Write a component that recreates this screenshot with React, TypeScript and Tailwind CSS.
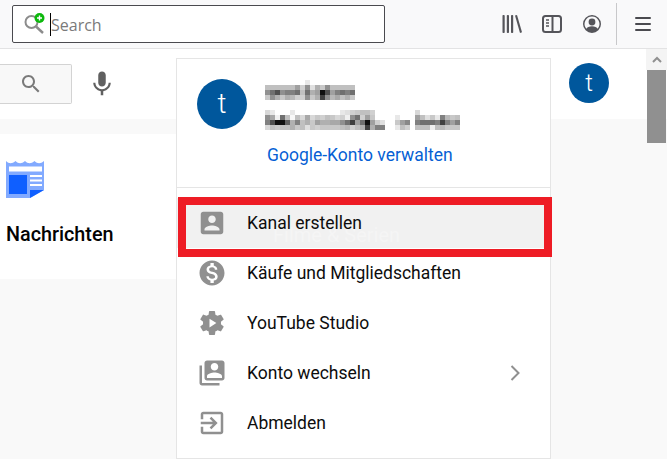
const MosaicRow = ({ cells }: { cells: string[] }) => (
  <div className="flex h-[5px]">
    {cells.map((c, i) => (
      <span key={i} className="block h-[5px] w-[5px]" style={{ backgroundColor: c === "ff" ? "#ffffff" : `#${c}${c}${c}` }} />
    ))}
  </div>
);

const nameRows = [
  "ff ff ff ff ff ff ff ff e8 ff ff ff ff ff ff ff ff ff",
  "c0 c0 c0 c0 c0 c0 a0 d0 90 e0 b0 c8 90 c0 c0 c0 c0 c0",
  "90 70 50 90 80 80 70 c0 70 b0 a0 10 50 a0 80 70 80 70",
  "c8 90 b0 c8 b0 b8 d0 d0 90 c8 b0 40 90 b8 a8 c0 b0 c8",
].map((r) => r.split(" "));

const mailRows = [
  "d8 e8 ff ff ff e8 ff ff ff ff ff ff ff ff ff e8 e0 d0 c8 c0 c0 d0 ff ff ff ff ff ff ff ff d8 ff ff ff ff ff ff ff ff",
  "90 a8 f0 70 c0 f8 c0 d8 a8 d8 c8 d0 c0 c8 d8 d0 f0 90 70 d0 a0 c8 ff ff ff ff e8 ff ff ff a0 c0 e0 c8 e8 80 b8 c8 c0",
  "80 50 10 10 60 b0 80 c0 b0 c8 a0 b0 b0 a8 a8 90 70 40 a0 70 10 a0 d0 e0 ff ff c8 a0 88 ff 80 70 70 70 80 40 80 a0 80",
  "d8 c0 c8 c0 c0 b0 c8 c0 e0 c8 d0 c8 c8 c8 c8 c0 b8 d0 c0 b0 40 b0 80 80 ff ff e8 c0 d0 ff c0 c0 c0 f0 c0 b8 c8 c8 c8",
].map((r) => r.split(" "));

const paths = {
  search:
    "M15.5 14h-.79l-.28-.27C15.41 12.59 16 11.11 16 9.5 16 5.91 13.09 3 9.5 3S3 5.91 3 9.5 5.91 16 9.5 16c1.61 0 3.09-.59 4.23-1.57l.27.28v.79l5 4.99L20.49 19l-4.99-5zm-6 0C7.01 14 5 11.99 5 9.5S7.01 5 9.5 5 14 7.01 14 9.5 11.99 14 9.5 14z",
  mic: "M12 14c1.66 0 2.99-1.34 2.99-3L15 5c0-1.66-1.34-3-3-3S9 3.34 9 5v6c0 1.66 1.34 3 3 3zm5.3-3c0 3-2.54 5.1-5.3 5.1S6.7 14 6.7 11H5c0 3.41 2.72 6.23 6 6.72V21h2v-3.28c3.28-.48 6-3.3 6-6.72h-1.7z",
  box: "M3 5v14c0 1.1.89 2 2 2h14c1.1 0 2-.9 2-2V5c0-1.1-.9-2-2-2H5c-1.11 0-2 .9-2 2zm12 4c0 1.66-1.34 3-3 3s-3-1.34-3-3 1.34-3 3-3 3 1.34 3 3zm-9 8c0-2 4-3.1 6-3.1s6 1.1 6 3.1v1H6v-1z",
  money:
    "M12 2C6.48 2 2 6.48 2 12s4.48 10 10 10 10-4.48 10-10S17.52 2 12 2zm1.41 16.09V20h-2.67v-1.93c-1.71-.36-3.16-1.46-3.27-3.4h1.96c.1 1.05.82 1.87 2.65 1.87 1.96 0 2.4-.98 2.4-1.59 0-.83-.44-1.61-2.67-2.14-2.48-.6-4.18-1.62-4.18-3.67 0-1.72 1.39-2.84 3.11-3.21V4h2.67v1.95c1.86.45 2.79 1.86 2.85 3.39H14.3c-.05-1.11-.64-1.87-2.22-1.87-1.5 0-2.4.68-2.4 1.64 0 .84.65 1.39 2.67 1.91s4.18 1.39 4.18 3.91c-.01 1.83-1.38 2.83-3.12 3.16z",
  studio:
    "M19.14 12.94c.04-.3.06-.61.06-.94 0-.32-.02-.64-.07-.94l2.03-1.58c.18-.14.23-.41.12-.61l-1.92-3.32c-.12-.22-.37-.29-.59-.22l-2.39.96c-.5-.38-1.03-.7-1.62-.94l-.36-2.54c-.04-.24-.24-.41-.48-.41h-3.84c-.24 0-.43.17-.47.41l-.36 2.54c-.59.24-1.13.57-1.62.94l-2.39-.96c-.22-.08-.47 0-.59.22L2.74 8.87c-.12.21-.08.47.12.61l2.03 1.58c-.05.3-.09.63-.09.94s.02.64.07.94l-2.03 1.58c-.18.14-.23.41-.12.61l1.92 3.32c.12.22.37.29.59.22l2.39-.96c.5.38 1.03.7 1.62.94l.36 2.54c.05.24.24.41.48.41h3.84c.24 0 .44-.17.47-.41l.36-2.54c.59-.24 1.13-.56 1.62-.94l2.39.96c.22.08.47 0 .59-.22l1.92-3.32c.12-.22.07-.47-.12-.61l-2.01-1.58zM10 8.500v7l5.500-3.500z",
  swap: "M4 6H2v14c0 1.1.9 2 2 2h14v-2H4V6zm16-4H8c-1.1 0-2 .9-2 2v12c0 1.1.9 2 2 2h12c1.1 0 2-.9 2-2V4c0-1.1-.9-2-2-2zm-6 2c1.66 0 3 1.34 3 3s-1.34 3-3 3-3-1.34-3-3 1.34-3 3-3zm6 12H8v-1.5c0-1.99 4-3 6-3s6 1.01 6 3V16z",
  exit: "M10.09 15.59L11.5 17l5-5-5-5-1.41 1.41L12.67 11H3v2h9.67l-2.58 2.59zM19 3H5c-1.11 0-2 .9-2 2v4h2V5h14v14H5v-4H3v4c0 1.1.89 2 2 2h14c1.1 0 2-.9 2-2V5c0-1.1-.9-2-2-2z",
};

const Mat = ({ d, className }: { d: string; className: string }) => (
  <svg viewBox="0 0 24 24" className={className} fill="currentColor" fillRule="evenodd">
    <path d={d} />
  </svg>
);

const menuItems = [
  { name: "Kanal erstellen", icon: paths.box, active: true },
  { name: "Käufe und Mitgliedschaften", icon: paths.money },
  { name: "YouTube Studio", icon: paths.studio },
  { name: "Konto wechseln", icon: paths.swap, arrow: true },
  { name: "Abmelden", icon: paths.exit },
];

const Avatar = ({ size }: { size: string }) => (
  <div className={`flex shrink-0 items-center justify-center rounded-full bg-[#00579c] font-light text-white ${size}`}>t</div>
);

const Toolbar = () => (
  <div className="flex h-[49px] items-center border-b border-[#e3e3e4] bg-[#f9f9fa]">
    {/* url bar */}
    <div className="ml-3 flex h-[38px] w-[373px] items-center rounded-[2px] border border-[#4a4a4f] bg-white pl-[10px]">
      <svg viewBox="0 0 26 24" className="h-6 w-[26px] shrink-0">
        <circle cx="8.500" cy="10" r="6" fill="none" stroke="#8c8c8c" strokeWidth="2" />
        <path d="M13 14.500l7 6.500" stroke="#8c8c8c" strokeWidth="2.400" />
        <circle cx="16.500" cy="6" r="5" fill="#0cb80c" />
        <path d="M14 6h5M16.500 3.500v5" stroke="#fff" strokeWidth="1.400" />
      </svg>
      <span className="ml-[1px] h-[23px] w-px shrink-0 bg-black" />
      <span className="mt-[2px] text-base leading-none text-[#7a7a7a] [font-family:'Open_Sans',sans-serif]">Search</span>
    </div>
    {/* firefox buttons */}
    <svg viewBox="0 0 20 20" className="ml-[117px] h-5 w-5 text-[#55555a]" fill="currentColor">
      <rect x="0.500" y="1" width="2.200" height="18" rx="0.800" />
      <rect x="4.800" y="1" width="2.200" height="18" rx="0.800" />
      <rect x="9" y="1" width="2.200" height="18" rx="0.800" />
      <path d="M13 1.600l2-.7 5 17.400-2 .7z" />
    </svg>
    <svg viewBox="0 0 20 18" className="ml-[20px] h-[18px] w-5 text-[#55555a]" fill="none" stroke="currentColor">
      <rect x="1" y="1" width="18" height="16" rx="2.500" strokeWidth="2" />
      <path d="M10.500 1v16" strokeWidth="2" />
      <path d="M4 5h3M4 8h3M4 11h3" strokeWidth="1.400" />
    </svg>
    <svg viewBox="0 0 18 18" className="ml-[21px] h-[18px] w-[18px] text-[#55555a]" fill="currentColor">
      <path
        fillRule="evenodd"
        d="M9 0a9 9 0 1 0 0 18A9 9 0 0 0 9 0zm0 1.600a7.400 7.400 0 0 1 5.700 12.100c-.8-1.500-2.900-2.500-5.700-2.500s-4.900 1-5.700 2.500A7.400 7.400 0 0 1 9 1.600z"
      />
      <circle cx="9" cy="7" r="3.400" />
    </svg>
    <span className="ml-[15px] h-[42px] w-px bg-[#c8c8ca]" />
    <div className="ml-[18px] flex w-4 flex-col gap-[4px]">
      <span className="h-[2px] w-4 rounded-sm bg-[#4a4a4f]" />
      <span className="h-[2px] w-4 rounded-sm bg-[#4a4a4f]" />
      <span className="h-[2px] w-4 rounded-sm bg-[#4a4a4f]" />
    </div>
  </div>
);

// the page behind the dropdown
const PageBehind = () => (
  <div className="flex h-[410px] flex-col bg-[#f9f9f9]">
    <div className="flex h-[70px] items-center bg-white">
      <div className="mt-[-1px] flex h-10 w-[72px] items-center rounded-r-[2px] border border-l-0 border-[#d3d3d3] bg-[#f8f8f8] pl-[19px] text-[#7a7a7a]">
        <Mat d={paths.search} className="h-6 w-6" />
      </div>
      <Mat d={paths.mic} className="ml-[15px] mt-[-1px] h-[30px] w-[30px] text-[#606060]" />
      <div className="ml-[452px] mt-[-2px]">
        <Avatar size="h-10 w-10 text-[24px]" />
      </div>
    </div>
    <div className="mt-[15px] h-[145px] w-[300px] bg-white pl-[6px] pt-[26px]">
      <svg viewBox="0 0 38 38" className="h-[38px] w-[38px]">
        <path d="M0 1c3 3 6 3 9.500 0 3 3 6 3 9.500 0 3 3 6 3 9.500 0 3 3 6 3 9.500 0V30L24 38H0z" fill="#82aaff" />
        <rect x="3" y="6.500" width="33" height="5" fill="#fff" />
        <rect x="3" y="15" width="18" height="19" fill="#0f5fff" />
        <path d="M24 16h12M24 20.500h12M24 25h12" stroke="#fff" strokeWidth="2" />
        <path d="M24 30h14L24 38z" fill="#0f5fff" />
      </svg>
      <div className="mt-[25px] text-[19.8px] font-medium leading-6 text-[#030303]">Nachrichten</div>
    </div>
  </div>
);

export default function App() {
  return (
    <div className="relative h-[459px] w-[667px] overflow-hidden bg-white [font-family:Roboto,sans-serif]">
      <Toolbar />
      <PageBehind />

      {/* account dropdown */}
      <div className="absolute left-[176px] top-[58px] flex h-[401px] w-[375px] flex-col border border-[#e5e5e5] bg-white">
        <div className="flex h-[129px] flex-col border-b border-[#e5e5e5]">
          <div className="flex pl-5 pt-5">
            <Avatar size="h-[50px] w-[50px] text-[28px]" />
            <div className="ml-[18px] mt-[1px] flex flex-col">
              <div>
                {nameRows.map((r, i) => (
                  <MosaicRow key={i} cells={r} />
                ))}
              </div>
              <div className="mt-[10px]">
                {mailRows.map((r, i) => (
                  <MosaicRow key={i} cells={r} />
                ))}
              </div>
            </div>
          </div>
          <a className="ml-[90px] mt-[15px] text-[17.5px] leading-5 text-[#065fd4]">Google-Konto verwalten</a>
        </div>
        <div className="flex flex-col pt-[10px]">
          {menuItems.map((item) => (
            <div
              key={item.name}
              className={`relative flex h-[50px] items-center pl-5 text-[#909090] ${item.active ? "bg-[#f1f1f1]" : ""}`}
            >
              {item.active && (
                <span className="absolute left-[96px] top-[25px] text-[20px] leading-6 text-[#f5f5f5]">Filme &amp; Serien</span>
              )}
              <Mat d={item.icon} className="relative h-[30px] w-[30px] shrink-0" />
              <span className="relative ml-5 text-[17.5px] text-[#0d0d0d]">{item.name}</span>
              {item.arrow && (
                <svg viewBox="0 0 10 16" className="ml-auto mr-[30px] h-4 w-[10px]">
                  <path d="M1.500 1l7 7-7 7" fill="none" stroke="#909090" strokeWidth="2" />
                </svg>
              )}
            </div>
          ))}
        </div>
      </div>

      {/* red annotation box */}
      <div className="absolute left-[178px] top-[197px] h-[60px] w-[374px] border-[8px] border-[#ee1c25]" />

      {/* scrollbar */}
      <div className="absolute right-0 top-[49px] flex w-[21px] flex-col">
        <div className="flex h-[21px] items-center justify-center bg-[#f4f4f4]">
          <svg viewBox="0 0 10 7" className="h-[7px] w-[10px]">
            <path d="M1 6l4-4 4 4" fill="none" stroke="#909090" strokeWidth="2" />
          </svg>
        </div>
        <div className="ml-px h-[73px] w-[19px] bg-[#909090]" />
      </div>
    </div>
  );
}
